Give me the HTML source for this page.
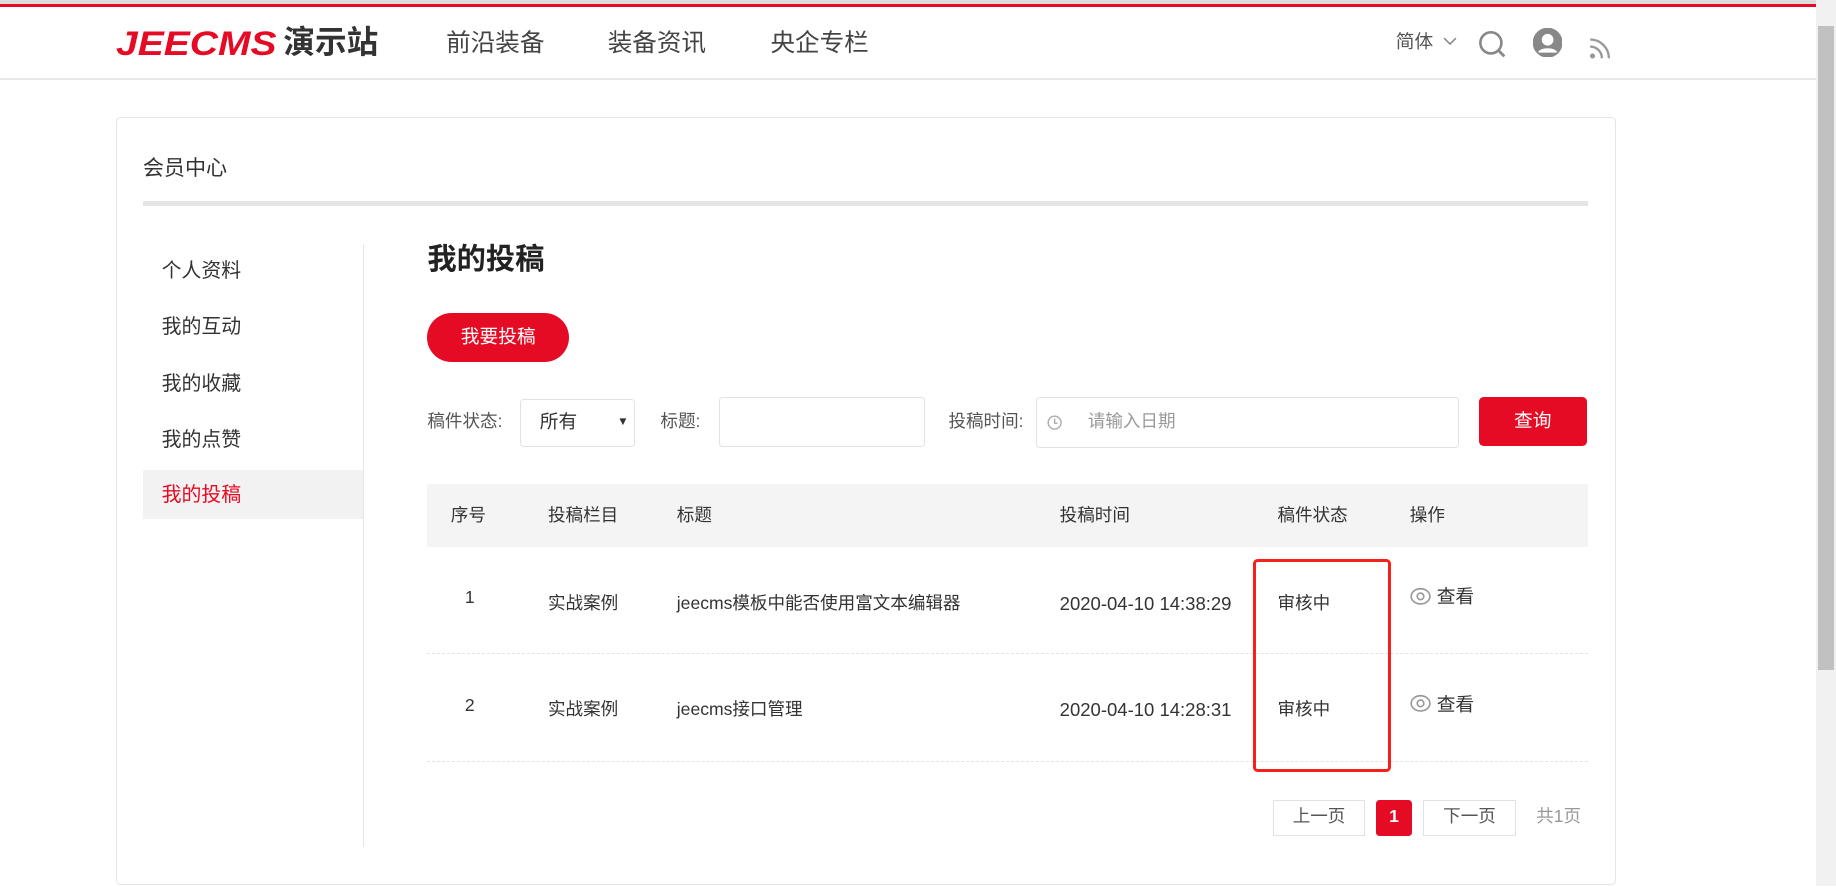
<!DOCTYPE html>
<html><head><meta charset="utf-8"><style>
html{zoom:1.17092}
body{margin:0;width:1568px;height:757px;overflow:hidden;background:#fff;font-family:"Liberation Sans","Noto Sans CJK SC",sans-serif;color:#333;position:relative}
.a{position:absolute}
.t{position:absolute;white-space:nowrap;line-height:1}
</style></head><body>
<div class="a" style="left:0;top:0;width:1551px;height:3px;background:#ddd"></div>
<div class="a" style="left:0;top:3px;width:1551px;height:3px;background:#e60b24"></div>
<div class="a" style="left:0;top:67px;width:1551px;height:1px;background:#e8e8e8"></div>
<div class="t" style="left:99px;top:24px;font-size:29px;font-weight:bold;font-style:italic;color:#e60b24;transform:scaleX(1.15);transform-origin:left top">JEECMS</div>
<div class="t" style="left:242px;top:23px;font-size:27px;font-weight:bold;color:#333">演示站</div>
<div class="t" style="left:381px;top:27px;font-size:21px;color:#444">前沿装备</div>
<div class="t" style="left:519px;top:27px;font-size:21px;color:#444">装备资讯</div>
<div class="t" style="left:658px;top:27px;font-size:21px;color:#444">央企专栏</div>
<div class="t" style="left:1192px;top:28px;font-size:16px;color:#555">简体</div>
<svg class="a" style="left:1232px;top:32px" width="12" height="8"><path d="M1 1l5 5 5-5" fill="none" stroke="#888" stroke-width="1.3"/></svg>
<svg class="a" style="left:1262px;top:26px" width="26" height="26"><circle cx="11" cy="11" r="9" fill="none" stroke="#888" stroke-width="2.2"/><path d="M17.5 17.5l5 5" stroke="#888" stroke-width="2.4"/></svg>
<svg class="a" style="left:1309px;top:24px" width="25" height="25"><circle cx="12.5" cy="12.5" r="12" fill="#888"/><circle cx="12.5" cy="10" r="5" fill="#fff"/><path d="M4 21c2-5 15-5 17 0" fill="#fff"/><circle cx="12.5" cy="12.5" r="12" fill="none" stroke="#888" stroke-width="1.5"/></svg>
<svg class="a" style="left:1357px;top:31px" width="20" height="20"><circle cx="3" cy="17" r="2.2" fill="#999"/><path d="M1 9a10 10 0 0 1 10 10M1 3a16 16 0 0 1 16 16" fill="none" stroke="#999" stroke-width="2"/></svg>
<div class="a" style="left:1551px;top:0;width:17px;height:757px;background:#f1f1f1"></div>
<div class="a" style="left:1553px;top:22px;width:13px;height:550px;background:#c1c1c1"></div>

<div class="a" style="left:99px;top:100px;width:1279px;height:654px;border:1px solid #e5e5e5;border-radius:4px"></div>
<div class="t" style="left:122px;top:135px;font-size:18px;color:#333">会员中心</div>
<div class="a" style="left:122px;top:172px;width:1234px;height:4px;background:#e5e5e5"></div>
<div class="a" style="left:310px;top:208px;width:1px;height:515px;background:#e5e5e5"></div>
<div class="a" style="left:122px;top:401px;width:188px;height:42px;background:#f2f2f2"></div>
<div class="t" style="left:138px;top:224px;font-size:17px">个人资料</div>
<div class="t" style="left:138px;top:272px;font-size:17px">我的互动</div>
<div class="t" style="left:138px;top:320px;font-size:17px">我的收藏</div>
<div class="t" style="left:138px;top:368px;font-size:17px">我的点赞</div>
<div class="t" style="left:138px;top:415px;font-size:17px;color:#e60b24">我的投稿</div>

<div class="t" style="left:365px;top:210px;font-size:25px;font-weight:bold;color:#222">我的投稿</div>
<div class="a" style="left:365px;top:267px;width:121px;height:42px;background:#e60b24;border-radius:21px"></div>
<div class="t" style="left:365px;top:280px;width:121px;text-align:center;font-size:16px;color:#fff">我要投稿</div>

<div class="t" style="left:365px;top:353px;font-size:15px;color:#555">稿件状态:</div>
<div class="a" style="left:444px;top:341px;width:97px;height:39px;border:1px solid #e2e2e2;border-radius:3px"></div>
<div class="t" style="left:461px;top:353px;font-size:16px;color:#333">所有</div>
<div class="t" style="left:527px;top:355px;font-size:10px;color:#333">▼</div>
<div class="t" style="left:564px;top:353px;font-size:15px;color:#555">标题:</div>
<div class="a" style="left:614px;top:339px;width:174px;height:41px;border:1px solid #e2e2e2;border-radius:3px"></div>
<div class="t" style="left:810px;top:353px;font-size:15px;color:#555">投稿时间:</div>
<div class="a" style="left:885px;top:339px;width:359px;height:42px;border:1px solid #e2e2e2;border-radius:3px"></div>
<svg class="a" style="left:894px;top:354px" width="13" height="13"><circle cx="6.5" cy="6.5" r="5.5" fill="none" stroke="#aaa" stroke-width="1.2"/><path d="M6.5 3v4h2.5" fill="none" stroke="#aaa" stroke-width="1.2"/></svg>
<div class="t" style="left:929px;top:353px;font-size:15px;color:#999">请输入日期</div>
<div class="a" style="left:1263px;top:339px;width:92px;height:42px;background:#e60b24;border-radius:4px"></div>
<div class="t" style="left:1263px;top:352px;width:92px;text-align:center;font-size:16px;color:#fff">查询</div>

<div class="a" style="left:365px;top:413px;width:991px;height:54px;background:#f4f4f4"></div>
<div class="t" style="left:385px;top:433px;font-size:15px">序号</div>
<div class="t" style="left:468px;top:433px;font-size:15px">投稿栏目</div>
<div class="t" style="left:578px;top:433px;font-size:15px">标题</div>
<div class="t" style="left:905px;top:433px;font-size:15px">投稿时间</div>
<div class="t" style="left:1091px;top:433px;font-size:15px">稿件状态</div>
<div class="t" style="left:1204px;top:433px;font-size:15px">操作</div>
<div class="a" style="left:365px;top:558px;width:991px;border-top:1px dashed #e3e3e3"></div>
<div class="a" style="left:365px;top:650px;width:991px;border-top:1px dashed #e3e3e3"></div>

<div class="t" style="left:397px;top:503px;font-size:15px">1</div>
<div class="t" style="left:468px;top:508px;font-size:15px">实战案例</div>
<div class="t" style="left:578px;top:508px;font-size:15px">jeecms模板中能否使用富文本编辑器</div>
<div class="t" style="left:905px;top:508px;font-size:15.8px">2020-04-10 14:38:29</div>
<div class="t" style="left:1091px;top:508px;font-size:15px">审核中</div>
<svg class="a" style="left:1204px;top:501px" width="18" height="16"><ellipse cx="9" cy="8" rx="8" ry="6.5" fill="none" stroke="#999" stroke-width="1.4"/><circle cx="9" cy="8" r="2.8" fill="none" stroke="#999" stroke-width="1.4"/></svg>
<div class="t" style="left:1227px;top:502px;font-size:16px">查看</div>

<div class="t" style="left:397px;top:595px;font-size:15px">2</div>
<div class="t" style="left:468px;top:599px;font-size:15px">实战案例</div>
<div class="t" style="left:578px;top:599px;font-size:15px">jeecms接口管理</div>
<div class="t" style="left:905px;top:599px;font-size:15.8px">2020-04-10 14:28:31</div>
<div class="t" style="left:1091px;top:599px;font-size:15px">审核中</div>
<svg class="a" style="left:1204px;top:593px" width="18" height="16"><ellipse cx="9" cy="8" rx="8" ry="6.5" fill="none" stroke="#999" stroke-width="1.4"/><circle cx="9" cy="8" r="2.8" fill="none" stroke="#999" stroke-width="1.4"/></svg>
<div class="t" style="left:1227px;top:594px;font-size:16px">查看</div>

<div class="a" style="left:1070px;top:477px;width:113px;height:177px;border:3px solid #f5221b;border-radius:4px"></div>

<div class="a" style="left:1087px;top:683px;width:77px;height:29px;border:1px solid #e2e2e2"></div>
<div class="t" style="left:1087px;top:690px;width:79px;text-align:center;font-size:15px;color:#555">上一页</div>
<div class="a" style="left:1175px;top:683px;width:31px;height:31px;background:#e60b24;border-radius:3px"></div>
<div class="t" style="left:1175px;top:690px;width:31px;text-align:center;font-size:15px;color:#fff;font-weight:bold">1</div>
<div class="a" style="left:1215px;top:683px;width:78px;height:29px;border:1px solid #e2e2e2"></div>
<div class="t" style="left:1215px;top:690px;width:80px;text-align:center;font-size:15px;color:#555">下一页</div>
<div class="t" style="left:1312px;top:690px;font-size:15px;color:#999">共1页</div>
</body></html>
